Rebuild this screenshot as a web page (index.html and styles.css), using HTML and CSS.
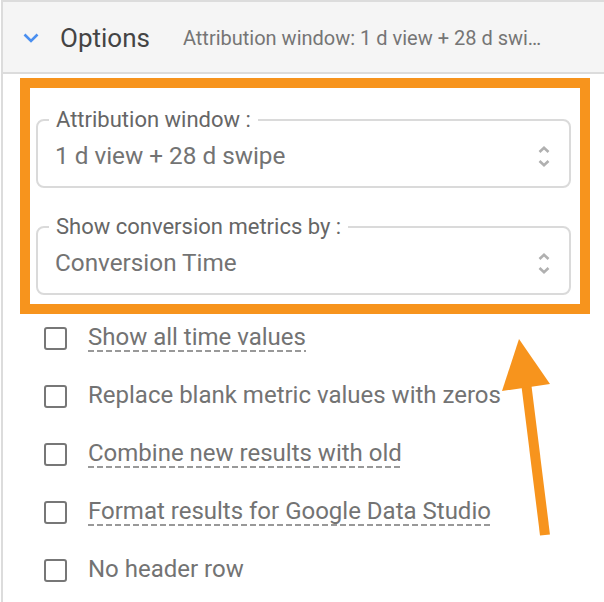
FILE: index.html
```html
<!DOCTYPE html>
<html>
<head>
<meta charset="utf-8">
<link rel="stylesheet" href="styles.css">
</head>
<body>
<div class="panel">
  <div class="header">
    <svg class="chev" width="16" height="10" viewBox="0 0 16 10"><path d="M1.5 1.5 L8 8 L14.5 1.5" fill="none" stroke="#4a8ff0" stroke-width="2.6"/></svg>
    <span class="title">Options</span>
    <span class="summary">Attribution window: 1 d view + 28 d swi…</span>
  </div>
  <div class="body">
    <div class="highlight">
      <fieldset class="field">
        <legend>Attribution window :</legend>
        <div class="select">
          <span>1 d view + 28 d swipe</span>
          <svg class="updown" width="14" height="21" viewBox="0 0 14 21"><path d="M2.5 6 L7 1.8 L11.5 6 M2.5 15 L7 19.2 L11.5 15" fill="none" stroke="#b0b0b0" stroke-width="2.6"/></svg>
        </div>
      </fieldset>
      <fieldset class="field second">
        <legend>Show conversion metrics by :</legend>
        <div class="select">
          <span>Conversion Time</span>
          <svg class="updown" width="14" height="21" viewBox="0 0 14 21"><path d="M2.5 6 L7 1.8 L11.5 6 M2.5 15 L7 19.2 L11.5 15" fill="none" stroke="#b0b0b0" stroke-width="2.6"/></svg>
        </div>
      </fieldset>
    </div>
    <ul class="checks">
      <li class="check"><span class="box"></span><span class="label dashed">Show all time values</span></li>
      <li class="check"><span class="box"></span><span class="label">Replace blank metric values with zeros</span></li>
      <li class="check"><span class="box"></span><span class="label dashed">Combine new results with old</span></li>
      <li class="check"><span class="box"></span><span class="label dashed">Format results for Google Data Studio</span></li>
      <li class="check"><span class="box"></span><span class="label">No header row</span></li>
    </ul>
  </div>
  <svg class="arrow" width="604" height="602" viewBox="0 0 604 602">
    <line x1="545" y1="535" x2="526" y2="382" stroke="#f7941d" stroke-width="10"/>
    <polygon points="519,339 502,391 550,384" fill="#f7941d"/>
  </svg>
</div>
</body>
</html>
```
FILE: styles.css
```css
html, body {
  margin: 0;
  padding: 0;
  background: #ffffff;
}
body {
  font-family: Roboto, "Liberation Sans", Arial, sans-serif;
  width: 604px;
  height: 602px;
  overflow: hidden;
}
.panel {
  margin-left: 1px;
  border-top: 2px solid #dcdcdc;
  border-left: 2px solid #dcdcdc;
  height: 600px;
}
.header {
  height: 70px;
  background: #f5f5f5;
  border-bottom: 2px solid #dcdcdc;
  display: flex;
  align-items: center;
  padding-left: 20px;
  white-space: nowrap;
}
.chev {
  display: block;
  margin-top: 2px;
}
.title {
  font-size: 26px;
  color: #444444;
  margin-left: 21px;
  margin-top: 1px;
}
.summary {
  font-size: 20px;
  color: #757575;
  margin-left: 33px;
  margin-top: 2px;
}
.body {
  padding-top: 4px;
}
.highlight {
  margin-left: 17px;
  width: 535px;
  border: 10px solid #f7941d;
  padding: 20px 9px 9px 6px;
}
.field {
  margin: 0;
  border: 2px solid #dadada;
  border-radius: 8px;
  padding: 11px 18px 17px 17px;
  min-width: 0;
}
.field.second {
  margin-top: 27px;
}
.field legend {
  font-size: 22px;
  line-height: 24px;
  color: #666666;
  padding: 0 7px;
  margin-left: -6px;
}
.select {
  display: flex;
  align-items: center;
  justify-content: space-between;
  font-size: 24.3px;
  line-height: 26px;
  color: #737373;
}
.updown {
  display: block;
}
.checks {
  list-style: none;
  margin: 12px 0 0 0;
  padding: 0 0 0 41px;
  display: flex;
  flex-direction: column;
  gap: 34px;
}
.check {
  display: flex;
  align-items: center;
  height: 24px;
}
.box {
  width: 19px;
  height: 19px;
  border: 2.6px solid #777777;
  border-radius: 3px;
  flex: none;
}
.label {
  margin-left: 21px;
  font-size: 24px;
  line-height: 24px;
  color: #737373;
  white-space: nowrap;
  padding-bottom: 3px;
}
.dashed {
  background-image: repeating-linear-gradient(to right, #999999 0 6px, transparent 6px 9px);
  background-size: 100% 2px;
  background-position: left bottom;
  background-repeat: no-repeat;
}
.arrow {
  position: absolute;
  left: 0;
  top: 0;
  pointer-events: none;
}
```
